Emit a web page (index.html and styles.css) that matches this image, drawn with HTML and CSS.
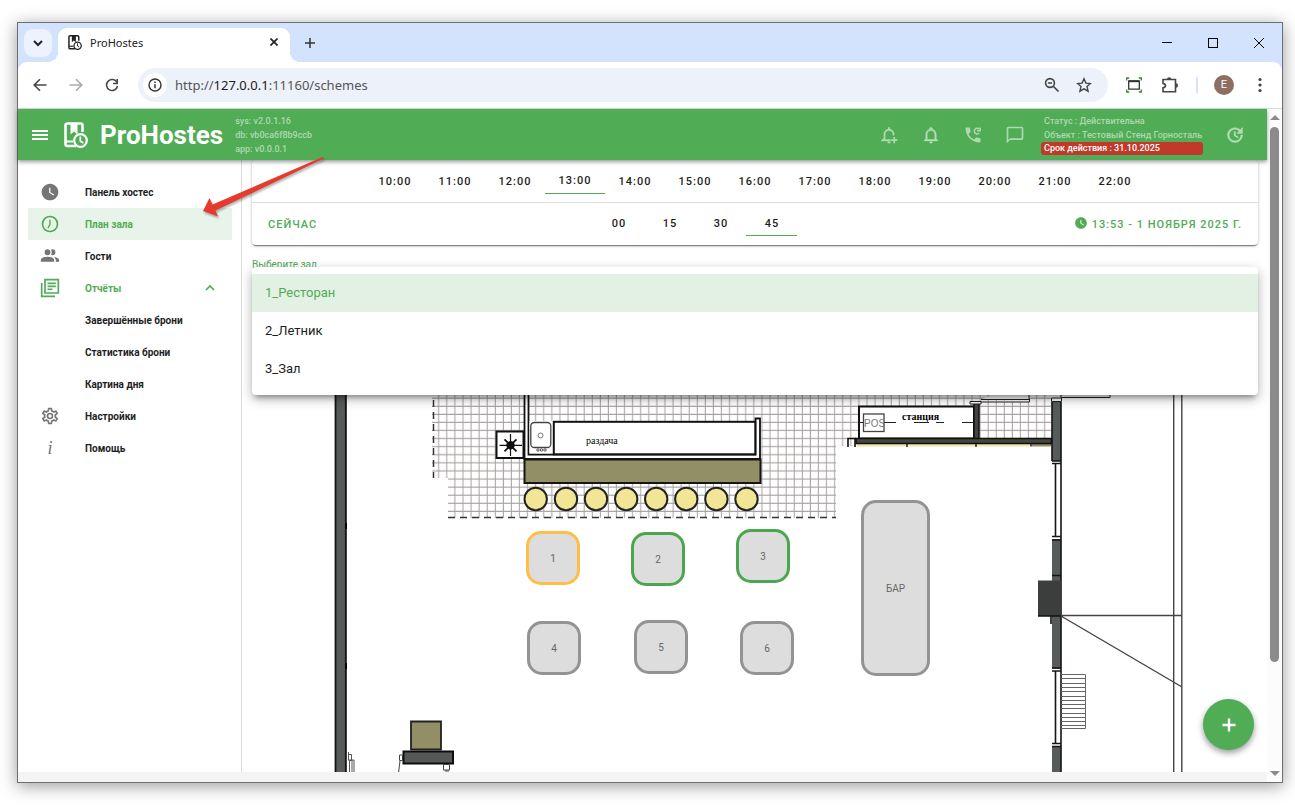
FILE: index.html
```html
<!DOCTYPE html>
<html lang="ru">
<head>
  <meta charset="UTF-8">
  <title>ProHostes</title>
  <link rel="stylesheet" href="styles.css">
</head>
<body>
  <svg class="defs" aria-hidden="true">
    <symbol id="logo" viewBox="0 0 24 26">
      <path d="M12 24H3.500Q1.500 24 1.500 22V3.500Q1.500 1.500 3.500 1.500H16.500Q18.500 1.500 18.500 3.500V10" fill="none" stroke="currentColor" stroke-width="2.600"/>
      <path d="M6.500 1.500h7v11L10 9.500l-3.500 3z" fill="currentColor"/>
      <path d="M2 19.500h7" stroke="currentColor" stroke-width="2"/>
      <circle cx="16.500" cy="18.500" r="6.300" fill="none" stroke="currentColor" stroke-width="2.200"/>
      <path d="M16.300 14.500v4.500l3 2" fill="none" stroke="currentColor" stroke-width="1.700"/>
    </symbol>
    <symbol id="clock" viewBox="0 0 24 24">
      <path fill="currentColor" d="M12 2C6.500 2 2 6.500 2 12s4.500 10 10 10 10-4.500 10-10S17.500 2 12 2m4.200 14.200L11 13V7h1.500v5.200l4.500 2.700-.8 1.300"/>
    </symbol>
  </svg>

  <div class="window">
    <div class="tabs">
      <button class="tab-search" aria-label="Поиск вкладок"><svg width="10" height="10" viewBox="0 0 10 10"><path d="M1 3l4 4 4-4" fill="none" stroke="#222" stroke-width="2"/></svg></button>
      <div class="tab">
        <svg width="14" height="15"><use href="#logo"/></svg>
        <span>ProHostes</span>
        <button aria-label="Закрыть"><svg width="8" height="8" viewBox="0 0 8 8"><path d="M0.500 0.500l7 7M7.500 0.500l-7 7" stroke="#222" stroke-width="1.700"/></svg></button>
      </div>
      <button class="new-tab" aria-label="Новая вкладка"><svg width="10" height="10" viewBox="0 0 10 10"><path d="M5 0v10M0 5h10" stroke="#333" stroke-width="1.500"/></svg></button>
      <div class="win-buttons">
        <button aria-label="Свернуть"><svg width="10" height="10"><path d="M0 4.500h10" stroke="#000"/></svg></button>
        <button aria-label="Развернуть"><svg width="10" height="10"><rect x=".5" y=".5" width="9" height="9" fill="none" stroke="#000"/></svg></button>
        <button aria-label="Закрыть окно"><svg width="10" height="10"><path d="M0 0l10 10M10 0L0 10" stroke="#000"/></svg></button>
      </div>
    </div>

    <div class="toolbar">
      <button aria-label="Назад"><svg width="14" height="14" viewBox="0 0 14 14"><path d="M13.500 7H1.500M7 1.200L1.200 7 7 12.800" fill="none" stroke="#474747" stroke-width="1.600"/></svg></button>
      <button aria-label="Вперёд"><svg width="14" height="14" viewBox="0 0 14 14"><path d="M.5 7h12M7 1.200L12.800 7 7 12.800" fill="none" stroke="#aaa" stroke-width="1.600"/></svg></button>
      <button aria-label="Обновить"><svg width="14" height="14" viewBox="0 0 14 14"><path d="M12 4.500A5.500 5.500 0 1 0 12.500 8" fill="none" stroke="#474747" stroke-width="1.600"/><path d="M12.200 1v4.500H8" fill="none" stroke="#474747" stroke-width="1.600"/></svg></button>
      <div class="address">
        <button class="info" aria-label="Сведения о сайте"><svg width="14" height="14" viewBox="0 0 14 14"><circle cx="7" cy="7" r="6" fill="none" stroke="#333" stroke-width="1.400"/><path d="M7 6.200v4M7 3.500v1.500" stroke="#333" stroke-width="1.500"/></svg></button>
        <span class="url">http://<b>127.0.0.1</b>:11160/schemes</span>
        <button aria-label="Масштаб"><svg width="16" height="16" viewBox="0 0 16 16"><circle cx="6" cy="6" r="4.400" fill="none" stroke="#444" stroke-width="1.600"/><path d="M9.500 9.500l5 5M4 6h4" stroke="#444" stroke-width="1.700"/></svg></button>
        <button aria-label="В закладки"><svg width="16" height="16" viewBox="0 0 16 16"><path d="M8 1.800l1.900 4.300 4.600.4-3.500 3.100 1.100 4.600L8 11.800l-4.100 2.400L5 9.600 1.500 6.500l4.600-.4z" fill="none" stroke="#444" stroke-width="1.400"/></svg></button>
      </div>
      <button aria-label="Снимок"><svg width="16" height="16" viewBox="0 0 16 16"><path d="M.7 3.500V1h2.500M12.800 1h2.500v2.500M.7 12.500V15h2.500M12.800 15h2.500v-2.500" fill="none" stroke="#2e8b2e" stroke-width="1.300"/><path d="M2.700 4.200h10.600v8H2.700z" fill="none" stroke="#333" stroke-width="1.300"/><path d="M2.500 4.200h11" stroke="#333" stroke-width="2"/></svg></button>
      <button aria-label="Расширения"><svg width="16" height="16" viewBox="0 0 16 16"><path d="M1 2.500h12.500v12.300H1v-4Q3.500 10.500 3.500 8.600T1 6.500z" fill="none" stroke="#444" stroke-width="1.600"/><path d="M5 2.200a2.200 2 0 0 1 4.400 0zM13.800 6.300a2.200 2.200 0 0 1 0 4.400z" fill="#444"/></svg></button>
      <i class="divider"></i>
      <span class="avatar">E</span>
      <button aria-label="Меню браузера"><svg width="14" height="16" viewBox="0 0 14 16"><g fill="#444"><circle cx="7" cy="2.500" r="1.600"/><circle cx="7" cy="8" r="1.600"/><circle cx="7" cy="13.500" r="1.600"/></g></svg></button>
    </div>

    <div class="page">
      <div class="app">
        <header class="header">
          <button aria-label="Меню"><svg width="16" height="12" viewBox="0 0 16 12"><path d="M0 2h16M0 6h16M0 10h16" stroke="#fff" stroke-width="1.800"/></svg></button>
          <svg class="logo" width="24" height="26"><use href="#logo"/></svg>
          <h1>ProHostes</h1>
          <div class="meta versions">
            <span>sys: v2.0.1.16</span>
            <span>db: vb0ca6f8b9ccb</span>
            <span>app: v0.0.0.1</span>
          </div>
          <div class="actions">
            <button aria-label="Добавить напоминание"><svg width="18" height="18" viewBox="0 0 24 24" fill="none" stroke="currentColor" stroke-width="2.400"><path d="M14 19H3.500L6 16.500V11a6 6 0 0 1 12 0v1.500M12 1.500v3.500M10 21.800h4M19 14.500v8.500M14.800 18.800h8.500"/></svg></button>
            <button aria-label="Уведомления"><svg width="18" height="18" viewBox="0 0 24 24"><path fill="currentColor" stroke="currentColor" stroke-width=".5" d="M10 21h4c0 1.100-.9 2-2 2s-2-.9-2-2m11-2v1H3v-1l2-2v-6c0-3.100 2.030-5.830 5-6.710V4c0-1.100.9-2 2-2s2 .9 2 2v.29c2.970.88 5 3.610 5 6.710v6l2 2m-4-8c0-2.760-2.240-5-5-5s-5 2.240-5 5v7h10v-7z"/></svg></button>
            <button aria-label="Звонки"><svg width="20" height="20" viewBox="0 0 24 24"><path fill="currentColor" d="M6.620 10.790c1.440 2.830 3.760 5.140 6.590 6.590l2.200-2.200c.27-.27.67-.36 1.020-.24 1.120.37 2.330.57 3.570.57.55 0 1 .45 1 1V20c0 .55-.45 1-1 1-9.390 0-17-7.610-17-17 0-.55.45-1 1-1h3.500c.55 0 1 .45 1 1 0 1.250.2 2.450.57 3.570.11.35.03.74-.25 1.020l-2.200 2.200z"/><path d="M19.500 9.600A3.400 3.400 0 1 1 19.300 4.800M20.600 3v3.800h-3.800" fill="none" stroke="currentColor" stroke-width="1.800"/></svg></button>
            <button aria-label="Сообщения"><svg width="20" height="20" viewBox="0 0 24 24"><path fill="currentColor" d="M20 2H4c-1.100 0-2 .9-2 2v18l4-4h14c1.100 0 2-.9 2-2V4c0-1.100-.9-2-2-2zm0 14H6l-2 2V4h16v12z"/></svg></button>
          </div>
          <div class="meta license">
            <span>Статус : Действительна</span>
            <span>Объект : Тестовый Стенд Горносталь</span>
            <span class="expired">Срок действия : 31.10.2025</span>
          </div>
          <button class="refresh" aria-label="Обновить данные"><svg width="20" height="20" viewBox="0 0 24 24"><path fill="currentColor" stroke="currentColor" stroke-width=".5" d="M21 10.120h-6.780l2.740-2.820c-2.730-2.700-7.150-2.800-9.880-.1-2.730 2.710-2.730 7.080 0 9.790s7.150 2.710 9.880 0C18.320 15.650 19 14.080 19 12.100h2c0 1.980-.88 4.550-2.640 6.290-3.510 3.480-9.210 3.480-12.720 0-3.500-3.470-3.530-9.110-.02-12.580s9.140-3.470 12.650 0L21 3v7.120zM12.500 8v4.250l3.500 2.080-.72 1.210L11 13V8h1.500z"/></svg></button>
        </header>

        <div class="content">
          <nav class="sidebar">
            <a href="#"><svg width="20" height="20"><use href="#clock"/></svg>Панель хостес</a>
            <a href="#" class="active"><svg width="20" height="20" viewBox="0 0 24 24" fill="none" stroke="currentColor" stroke-width="2"><circle cx="12" cy="12" r="9"/><path d="M12 7v5.500L9.500 17" stroke-width="1.600"/></svg>План зала</a>
            <a href="#"><svg width="20" height="20" viewBox="0 0 24 24"><path fill="currentColor" d="M17 17v2H1v-2s0-4 8-4 8 4 8 4m-4.500-9.500A3.500 3.500 0 1 0 9 11a3.500 3.500 0 0 0 3.500-3.500m4 5.600A5.320 5.320 0 0 1 19 17v2h4v-2s0-3.400-6.500-3.900M15 4a3.390 3.390 0 0 0-1.930.59 5 5 0 0 1 0 5.820A3.390 3.390 0 0 0 15 11a3.500 3.500 0 0 0 0-7z"/></svg>Гости</a>
            <a href="#" class="open"><svg width="20" height="20" viewBox="0 0 24 24" fill="none" stroke="currentColor" stroke-width="2"><path d="M6 2h16v16H6zM2 6v16h16"/><path d="M9 6.500h10M9 10h10M9 13.500h6"/></svg>Отчёты<svg class="chevron" width="10" height="8" viewBox="0 0 10 8"><path d="M1 6l4-4 4 4" fill="none" stroke="currentColor" stroke-width="1.700"/></svg></a>
            <a href="#" class="sub">Завершённые брони</a>
            <a href="#" class="sub">Статистика брони</a>
            <a href="#" class="sub">Картина дня</a>
            <a href="#"><svg width="20" height="20" viewBox="0 0 24 24"><path fill="currentColor" d="M12 8a4 4 0 0 1 4 4 4 4 0 0 1-4 4 4 4 0 0 1-4-4 4 4 0 0 1 4-4m0 2a2 2 0 0 0-2 2 2 2 0 0 0 2 2 2 2 0 0 0 2-2 2 2 0 0 0-2-2m-2 12c-.25 0-.46-.18-.5-.42l-.37-2.650c-.63-.25-1.170-.59-1.690-.99l-2.490 1.010c-.22.08-.49 0-.61-.22l-2-3.460c-.13-.22-.07-.49.12-.64l2.110-1.660L4.500 12l.07-1-2.110-1.630c-.19-.15-.25-.42-.12-.64l2-3.460c.12-.22.39-.31.61-.22l2.490 1c.52-.39 1.060-.73 1.690-.98l.37-2.650c.04-.24.25-.42.5-.42h4c.25 0 .46.18.5.42l.37 2.650c.63.25 1.170.59 1.690.98l2.490-1c.22-.09.49 0 .61.22l2 3.460c.13.22.07.49-.12.64L19.430 11l.07 1-.07 1 2.110 1.630c.19.15.25.42.12.64l-2 3.460c-.12.22-.39.31-.61.22l-2.490-1c-.52.39-1.060.73-1.690.98l-.37 2.650c-.04.24-.25.42-.5.42h-4m1.250-18-.37 2.610c-1.200.25-2.260.89-3.030 1.780L5.440 7.350l-.75 1.300L6.800 10.200a5.550 5.550 0 0 0 0 3.600l-2.120 1.560.75 1.300 2.430-1.040c.77.88 1.820 1.520 3.010 1.760l.37 2.620h1.520l.37-2.610c1.190-.25 2.240-.89 3.010-1.770l2.430 1.040.75-1.300-2.120-1.550c.4-1.170.4-2.440 0-3.610l2.110-1.550-.75-1.300-2.410 1.040a5.420 5.420 0 0 0-3.030-1.770L12.750 4h-1.500z"/></svg>Настройки</a>
            <a href="#"><i class="help">i</i>Помощь</a>
          </nav>

          <main class="main">
            <section class="time-card">
              <div class="hours">
                <button>10:00</button><button>11:00</button><button>12:00</button><button class="selected">13:00</button><button>14:00</button><button>15:00</button><button>16:00</button><button>17:00</button><button>18:00</button><button>19:00</button><button>20:00</button><button>21:00</button><button>22:00</button>
              </div>
              <div class="minutes-row">
                <button class="now">Сейчас</button>
                <div class="minutes">
                  <button>00</button><button>15</button><button>30</button><button class="selected">45</button>
                </div>
                <button class="date"><svg width="14" height="14"><use href="#clock"/></svg>13:53 - 1 ноября 2025 г.</button>
              </div>
            </section>

            <div class="field">
              <label for="hall">Выберите зал</label>
              <select id="hall">
                <option>1_Ресторан</option>
                <option>2_Летник</option>
                <option>3_Зал</option>
              </select>
              <ul class="menu" role="listbox">
                <li role="option" aria-selected="true">1_Ресторан</li>
                <li role="option">2_Летник</li>
                <li role="option">3_Зал</li>
              </ul>
            </div>

            <div class="plan">
              <svg width="1006" height="470" viewBox="252 302 1006 470">
                <defs>
                  <pattern id="tiles" x="431.200" y="390.700" width="8.080" height="8.080" patternUnits="userSpaceOnUse">
                    <path d="M7.500 0v8.080M0 7.500h8.080" stroke="#a8a0a0" fill="none"/>
                  </pattern>
                </defs>
                <!-- tiled floor -->
                <path d="M432 380H1051V446H836V518H448V478H432z" fill="url(#tiles)"/>
                <path d="M433.500 400V478" stroke="#333" stroke-width="1.500" stroke-dasharray="7 5"/>
                <path d="M448 517.500H836" stroke="#333" stroke-width="1.500" stroke-dasharray="7 5"/>

                <!-- left wall -->
                <path d="M335 380h11.500v400H335z" fill="#585b5b"/>
                <path d="M335.500 380V780M345.800 380V780" stroke="#151515" stroke-width="1.800"/>
                <path d="M346 523v6M346 663v6" stroke="#000" stroke-width="2"/>
                <path d="M348.500 752v8M348.500 754.500h3v6h-3M349.500 760v14M352 760v14M354 760v14M349 760h5" fill="none" stroke="#555"/>

                <!-- serving counter -->
                <path d="M524.500 380h4v74.500H755.500V418.500h4.500V459H524.500z" fill="#fff" stroke="#111" stroke-width="1.800"/>
                <rect x="529.500" y="421" width="24" height="32.500" fill="#fff"/>
                <rect x="553.800" y="421.800" width="201.500" height="32.500" fill="#fff" stroke="#111" stroke-width="2"/>
                <rect x="530.800" y="422.500" width="20" height="25" rx="3.500" fill="#fff" stroke="#444" stroke-width="1.300"/>
                <circle cx="540.500" cy="435.500" r="2.500" fill="none" stroke="#777"/>
                <g fill="none" stroke="#555"><circle cx="538" cy="450" r="1.200"/><circle cx="541.500" cy="450" r="1.200"/><circle cx="545" cy="450" r="1.200"/></g>
                <text x="586" y="444" class="room">раздача</text>
                <rect x="524.500" y="459.500" width="236" height="23.500" fill="#928e65" stroke="#151515" stroke-width="2"/>
                <rect x="496.500" y="431.500" width="27" height="26.500" fill="#fff" stroke="#111" stroke-width="2"/>
                <path d="M510.500 434v22M499.500 445.300h22.500" stroke="#111" stroke-width="1.200"/>
                <path d="M504.500 439.300l12 12M516.500 439.300l-12 12" stroke="#111" stroke-width="1.800"/>
                <circle cx="510.500" cy="445.300" r="4.200" fill="#111"/>
                <g fill="#f0e695" stroke="#222" stroke-width="2">
                  <circle cx="535.700" cy="499" r="11.200"/><circle cx="566" cy="499" r="11.200"/><circle cx="596" cy="499" r="11.200"/><circle cx="626.200" cy="499" r="11.200"/>
                  <circle cx="656.200" cy="499" r="11.200"/><circle cx="686.300" cy="499" r="11.200"/><circle cx="716.400" cy="499" r="11.200"/><circle cx="746.500" cy="499" r="11.200"/>
                </g>

                <!-- waiter station -->
                <rect x="859" y="406.500" width="115" height="32" fill="#fff" stroke="#111" stroke-width="2"/>
                <path d="M859 422.500h5M884 422.500h12M914 422.500h15M936 422.500h8M962 422.500h12" stroke="#222"/>
                <rect x="863.500" y="414" width="20.500" height="17.500" fill="#fff" stroke="#444" stroke-width="1.300"/>
                <text x="864" y="427" class="pos">POS</text>
                <text x="902" y="420" class="station">станция</text>
                <path d="M974 403h5v36h-5z" fill="#444" stroke="#111" stroke-width="1.500"/>
                <path d="M970 401.500h11v2.500h-11zM981 399.500h48V380M981 402h48.500v-3" fill="#fff" stroke="#222"/>
                <path d="M848 447v-8.500h8M855 438v9" fill="none" stroke="#111" stroke-width="1.600"/>
                <path d="M857 443h173v3.500H857z" fill="#eee7ac"/>
                <path d="M1032 443h19v3.500h-19z" fill="#928e65"/>
                <path d="M907 443v4M976 443v4M1031 443v3.500" stroke="#222" stroke-width="1.500"/>
                <path d="M856 438.500h195.500v5H856z" fill="#44463f" stroke="#111" stroke-width="1.500"/>

                <!-- right wall -->
                <g fill="#585b5b">
                  <path d="M1052 401h9v60h-9zM1052 539h9v130h-9zM1052 746h9v30h-9z"/>
                </g>
                <path d="M1051.500 398h10v3.500h-10zM1061 394h49v3.500h-49z" fill="#fff" stroke="#222"/>
                <path d="M1052 402v59M1061 402V776M1055.500 463v73M1055.500 671v73M1052 461h9M1052 463.500h9M1052 536.500h9M1052 540h9M1052 575.500h9M1052 668h9M1052 671h9M1052 743.500h9M1052 746.500h9" fill="none" stroke="#151515" stroke-width="1.600"/>
                <path d="M1038 580.500h23v35.500h-23z" fill="#3c3e3d"/>
                <path d="M1038 616h23M1051 616v8" stroke="#111" stroke-width="1.600"/>
                <path d="M1173.700 380V776M1181.800 380V776M1061 615.500h121M1061 616l121 71" fill="none" stroke="#444" stroke-width="1.400"/>
                <path d="M1061 674.500h24.500v54H1061M1061 678.500h24M1061 683.500h24M1061 687.500h24M1061 691.500h24M1061 696.500h24M1061 700.500h24M1061 704.500h24M1061 708.500h24M1061 713.500h24M1061 717.500h24M1061 721.500h24M1061 725.500h24" fill="none" stroke="#666"/>

                <!-- bench -->
                <path d="M411 721.500h30v28h-30z" fill="#928e65" stroke="#222" stroke-width="1.800"/>
                <path d="M403.500 751.500h49.500v12h-49.500z" fill="#565858" stroke="#0d0d0d" stroke-width="2"/>
                <path d="M399.500 755h3v5.500h-3zM400 761l-1.500 12M443.500 764.500h6v5.500h-6zM445 771h4" fill="none" stroke="#444"/>
              </svg>
              <button class="table wait t1">1</button>
              <button class="table free t2">2</button>
              <button class="table free t3">3</button>
              <button class="table t4">4</button>
              <button class="table t5">5</button>
              <button class="table t6">6</button>
              <button class="table bar">БАР</button>
            </div>
          </main>
        </div>
        <button class="fab" aria-label="Добавить бронь"><svg width="14" height="14" viewBox="0 0 14 14"><path d="M7 0.500v13M0.500 7h13" stroke="#fff" stroke-width="2.400"/></svg></button>
      </div>
      <div class="scrollbar"><i class="up"></i><i class="track"><i class="thumb"></i></i><i class="down"></i></div>
    </div>

    <svg class="pointer" width="130" height="66" viewBox="0 0 130 66"><path d="M2 55L8.500 42l3 6.500L121.500 1l1.500 1.500L14.500 54.500l2.500 6z" fill="#e53b2f"/></svg>
  </div>
</body>
</html>
```
FILE: styles.css
```css
* { box-sizing: border-box; }
body {
  margin: 0;
  height: 100vh;
  padding: 22px 12px 25px 17px;
  background: #fff;
  font-family: Roboto, "Liberation Sans", sans-serif;
  overflow: hidden;
}
button {
  display: flex;
  align-items: center;
  justify-content: center;
  padding: 0;
  border: 0;
  background: none;
  font-family: inherit;
  color: inherit;
  cursor: pointer;
}
.defs { position: absolute; width: 0; height: 0; }
.window {
  position: relative;
  display: flex;
  flex-direction: column;
  height: 100%;
  border: 1px solid #6c6e72;
  background: #d3e3fd;
  box-shadow: 0 3px 16px rgba(0, 0, 0, .4);
}

/* browser tabs */
.tabs {
  display: flex;
  align-items: center;
  height: 39px;
  padding-left: 6px;
}
.tab-search {
  width: 28px;
  height: 28px;
  border-radius: 9px;
  background: #ecf3fe;
}
.tab {
  position: relative;
  display: flex;
  align-items: center;
  gap: 8px;
  align-self: flex-end;
  width: 232px;
  height: 34px;
  margin-left: 6px;
  padding: 0 12px 6px 10px;
  border-radius: 9px 9px 0 0;
  background: #fff;
  color: #222;
}
.tab::before, .tab::after {
  content: "";
  position: absolute;
  bottom: 0;
  width: 10px;
  height: 10px;
}
.tab::before { left: -10px; background: radial-gradient(circle at 0 0, transparent 10px, #fff 10px); }
.tab::after { right: -10px; background: radial-gradient(circle at 100% 0, transparent 10px, #fff 10px); }
.tab span { flex: 1; font: 11px "Noto Sans", sans-serif; }
.new-tab { width: 40px; height: 28px; }
.win-buttons { display: flex; margin-left: auto; }
.win-buttons button { width: 46px; height: 38px; }

/* address bar */
.toolbar {
  display: flex;
  align-items: center;
  height: 47px;
  padding: 0 8px 0 4px;
  border-bottom: 1px solid #dcdcdc;
  border-radius: 9px 9px 0 0;
  background: #fff;
}
.toolbar > button { width: 36px; height: 34px; }
.toolbar > button:last-child { width: 28px; }
.address {
  display: flex;
  flex: 1;
  align-items: center;
  height: 34px;
  margin: 0 8px;
  padding: 0 8px 0 5px;
  border-radius: 17px;
  background: #ecf1fa;
}
.address button { width: 32px; height: 32px; }
.address .info { width: 24px; height: 24px; border-radius: 50%; background: #fff; }
.url { flex: 1; margin-left: 8px; font: 13px "Noto Sans", sans-serif; color: #555; }
.url b { font-weight: normal; color: #1a1a1a; }
.divider { width: 2px; height: 16px; margin: 0 16px 0 8px; background: #d3e3fd; }
.avatar {
  width: 20px;
  height: 20px;
  margin-right: 12px;
  border-radius: 50%;
  background: #8d6e63;
  color: #fff;
  font-size: 11px;
  line-height: 20px;
  text-align: center;
}

/* page */
.page { display: flex; flex: 1; min-height: 0; background: #fff; }
.app {
  position: relative;
  display: flex;
  flex: 1;
  flex-direction: column;
  min-width: 0;
  padding-bottom: 10px;
  background: #f4f4f4;
}
.header {
  position: relative;
  z-index: 2;
  display: flex;
  align-items: center;
  height: 51px;
  padding: 0 22px 0 14px;
  background: #50ac55;
  color: rgba(255, 255, 255, .55);
  box-shadow: 0 2px 4px rgba(0, 0, 0, .4);
}
.header .logo { margin: 0 12px 0 16px; color: #fff; }
.header h1 { margin: 0; font-size: 26px; line-height: 30px; color: #fff; }
.meta { display: flex; flex-direction: column; font-size: 9px; font-weight: 500; line-height: 14px; white-space: nowrap; }
.versions { margin-left: 12px; }
.license { width: 162px; }
.license span { padding-left: 3px; }
.license .expired { line-height: 13px; border-radius: 3px; background: #c0392b; color: #fff; }
.actions { display: flex; margin: 0 5px 0 auto; }
.actions button { width: 42px; height: 40px; }
.refresh { width: 20px; height: 40px; margin-left: 22px; }

.content { display: flex; flex: 1; min-height: 0; background: #fff; }
.sidebar {
  flex: none;
  width: 224px;
  padding: 16px 9px 0 10px;
  border-right: 1px solid #ddd;
}
.sidebar a {
  display: flex;
  align-items: center;
  gap: 25px;
  height: 32px;
  padding: 0 17px 0 12px;
  font-size: 10px;
  font-weight: 700;
  color: #1e1e1e;
  text-decoration: none;
}
.sidebar svg { flex: none; color: #757575; }
.sidebar .sub { padding-left: 57px; }
.sidebar .active { background: #e8f4e9; }
.sidebar .active, .sidebar .open, .sidebar .active svg, .sidebar .open svg { color: #50ac55; }
.sidebar .chevron { margin-left: auto; }
.help { width: 20px; text-align: center; font: italic 18px "Liberation Serif", serif; color: #757575; }

.main { display: flex; flex: 1; flex-direction: column; min-width: 0; padding: 0 9px 0 10px; }
.time-card {
  flex: none;
  border-radius: 4px;
  box-shadow: 0 2px 1px -1px rgba(0, 0, 0, .4), 0 1px 3px rgba(0, 0, 0, .3);
}
.time-card button { font-size: 11px; font-weight: 500; letter-spacing: 1px; color: #1e1e1e; }
.hours { display: flex; justify-content: center; height: 43px; padding-bottom: 8px; border-bottom: 1px solid #ddd; }
.hours button { width: 60px; padding-top: 8px; }
.minutes-row { display: flex; justify-content: space-between; height: 42px; }
.minutes { display: flex; padding-bottom: 9px; }
.minutes button { width: 51px; padding-top: 8px; }
.time-card .selected { border-bottom: 1px solid #50ac55; }
.time-card .now, .time-card .date { padding: 0 16px; color: #50ac55; text-transform: uppercase; }
.date svg { margin: 0 4px 2px 0; }

.field { position: relative; z-index: 1; display: flex; flex: none; flex-direction: column; margin-top: 13px; }
.field label { font-size: 10px; line-height: 14px; color: #50ac55; }
.field select { height: 30px; border: 0; border-bottom: 1px solid #50ac55; background: #fff; font: 13px Roboto, sans-serif; }
.menu {
  position: absolute;
  top: 9px;
  left: 0;
  right: 0;
  margin: 0;
  padding: 7px 0;
  border-radius: 4px;
  background: #fff;
  box-shadow: 0 5px 5px -3px rgba(0, 0, 0, .3), 0 4px 12px rgba(0, 0, 0, .3);
  list-style: none;
}
.menu li { padding: 0 13px; font-size: 13px; line-height: 38px; color: #1e1e1e; }
.menu li[aria-selected] { background: #e3f1e4; color: #50ac55; }

/* hall plan */
.plan { position: relative; flex: 1; overflow: hidden; }
.plan > svg { display: block; }
.room { font: 10px "Liberation Serif", serif; }
.station { font: bold 10px "Liberation Serif", serif; }
.pos { font: 10px "Liberation Sans", sans-serif; fill: #777; }
.table {
  position: absolute;
  width: 54px;
  height: 54px;
  border: 3px solid #939393;
  border-radius: 15px;
  background: #ddd;
  font-size: 10px;
  color: #666;
}
.table.free { border-color: #4aa74d; }
.table.wait { border-color: #ffbf47; }
.t1 { left: 274px; top: 229px; }
.t2 { left: 379px; top: 230px; }
.t3 { left: 484px; top: 227px; }
.t4 { left: 275px; top: 319px; }
.t5 { left: 382px; top: 318px; }
.t6 { left: 488px; top: 319px; }
.table.bar { left: 609px; top: 198px; width: 69px; height: 176px; }

.fab {
  position: absolute;
  right: 13px;
  bottom: 32px;
  z-index: 2;
  width: 51px;
  height: 51px;
  border-radius: 50%;
  background: #50ac55;
  box-shadow: 0 3px 6px rgba(0, 0, 0, .4);
}

.scrollbar {
  display: flex;
  flex-direction: column;
  align-items: center;
  width: 15px;
  padding: 6px 0;
  background: #fcfcfc;
}
.up, .down { border: 5px solid transparent; }
.up { border-top: 0; border-bottom: 5px solid #8b8b8b; }
.down { border-bottom: 0; border-top: 5px solid #8b8b8b; }
.track { flex: 1; width: 9px; padding: 7px 0; }
.thumb { display: block; height: 84%; border-radius: 5px; background: #8b8b8b; }

/* red arrow over the page */
.pointer { position: absolute; left: 183px; top: 133px; z-index: 3; filter: drop-shadow(1px 2px 1px rgba(0, 0, 0, .3)); }
```
